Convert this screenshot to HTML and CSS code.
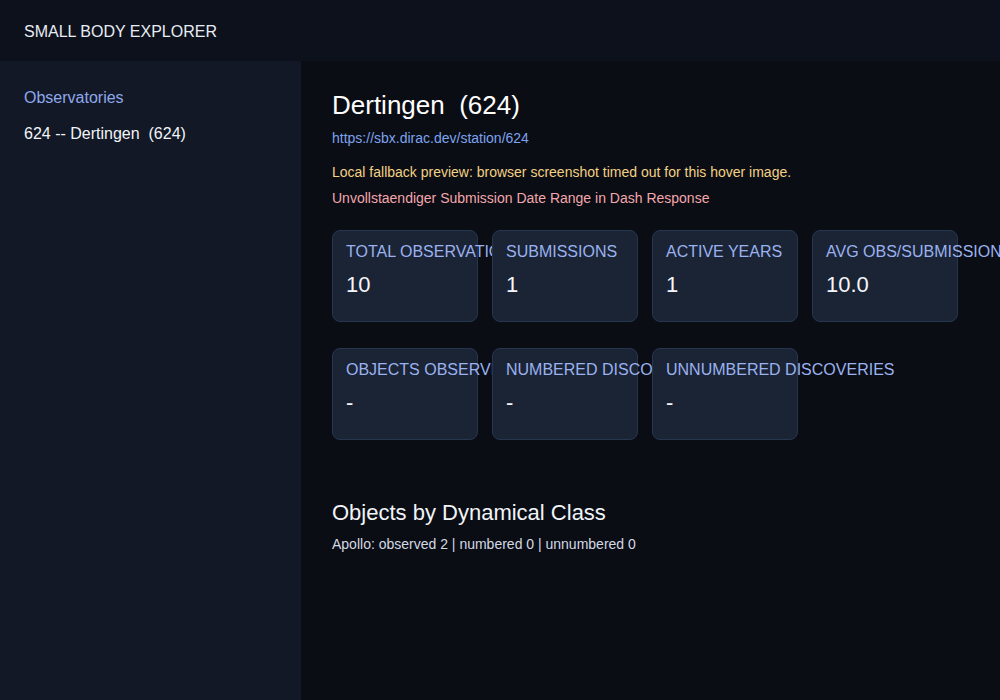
FILE: index.html
```html
<!DOCTYPE html>
<html lang="en">
<head>
<meta charset="utf-8">
<title>Small Body Explorer</title>
<link rel="stylesheet" href="styles.css">
</head>
<body>
<header class="topbar">SMALL BODY EXPLORER</header>
<div class="layout">
  <aside class="sidebar">
    <div class="side-title">Observatories</div>
    <div class="side-item">624 -- Dertingen&nbsp; (624)</div>
  </aside>
  <main class="content">
    <h1 class="title">Dertingen&nbsp; (624)</h1>
    <a class="link" href="#">https://sbx.dirac.dev/station/624</a>
    <p class="warn">Local fallback preview: browser screenshot timed out for this hover image.</p>
    <p class="error">Unvollstaendiger Submission Date Range in Dash Response</p>
    <div class="stat-row">
      <div class="card"><div class="label">TOTAL OBSERVATIONS</div><div class="value">10</div></div>
      <div class="card"><div class="label">SUBMISSIONS</div><div class="value">1</div></div>
      <div class="card"><div class="label">ACTIVE YEARS</div><div class="value">1</div></div>
      <div class="card"><div class="label">AVG OBS/SUBMISSIONS</div><div class="value">10.0</div></div>
    </div>
    <div class="stat-row">
      <div class="card"><div class="label">OBJECTS OBSERVED</div><div class="value">-</div></div>
      <div class="card"><div class="label">NUMBERED DISCOVERIES</div><div class="value">-</div></div>
      <div class="card"><div class="label">UNNUMBERED DISCOVERIES</div><div class="value">-</div></div>
    </div>
    <h2 class="section">Objects by Dynamical Class</h2>
    <p class="class-line">Apollo: observed 2 | numbered 0 | unnumbered 0</p>
  </main>
</div>
</body>
</html>
```

FILE: styles.css
```css
* { box-sizing: border-box; }
html, body {
  margin: 0;
  padding: 0;
  height: 100%;
  overflow: hidden;
}
body {
  font-family: "Liberation Sans", Arial, sans-serif;
  background: #0a0d14;
  color: #e8ecf4;
}
.topbar {
  height: 61px;
  padding: 2px 24px 0;
  display: flex;
  align-items: center;
  font-size: 16px;
  background: #0c111b;
  color: #e8ecf4;
}
.layout {
  display: flex;
  height: calc(100% - 61px);
}
.sidebar {
  width: 301px;
  flex: none;
  background: #121825;
  padding: 28px 24px;
}
.side-title {
  font-size: 16px;
  color: #8fa9ec;
  margin-bottom: 18px;
}
.side-item {
  font-size: 16px;
  color: #f1f4f8;
}
.content {
  flex: 1;
  min-width: 0;
  overflow: hidden;
  padding: 29px 31px;
}
.title {
  margin: 0 0 9px;
  font-size: 26px;
  font-weight: normal;
  color: #ffffff;
}
.link {
  display: block;
  font-size: 14px;
  color: #7ea3ee;
  text-decoration: none;
}
.warn {
  margin: 18px 0 0;
  font-size: 14px;
  color: #f3d185;
}
.error {
  margin: 10px 0 0;
  font-size: 14px;
  color: #f3a7ad;
}
.stat-row {
  display: flex;
  gap: 14px;
}
.stat-row + .stat-row { margin-top: 26px; }
.content .error + .stat-row { margin-top: 24px; }
.card {
  width: 146px;
  height: 92px;
  flex: none;
  padding: 12px 13px;
  background: #1b2435;
  border: 1px solid #263651;
  border-radius: 8px;
}
.label {
  font-size: 16px;
  white-space: nowrap;
  color: #9ab2ef;
}
.value {
  margin-top: 11px;
  font-size: 22px;
  color: #f4f6fa;
}
.section {
  margin: 60px 0 10px;
  font-size: 22px;
  font-weight: normal;
  color: #f1f4f8;
}
.class-line {
  margin: 0;
  font-size: 14px;
  color: #d3d9e4;
}
```
